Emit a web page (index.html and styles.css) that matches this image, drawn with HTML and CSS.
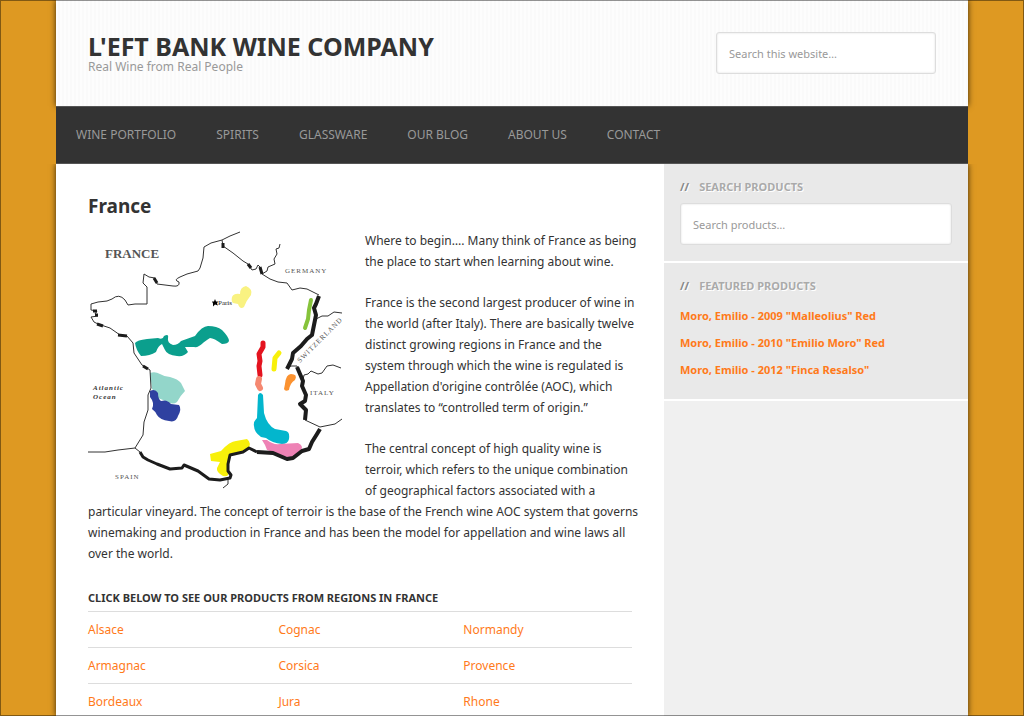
FILE: index.html
```html
<!DOCTYPE html>
<html lang="en">
<head>
<meta charset="utf-8">
<meta name="viewport" content="width=device-width, initial-scale=1">
<title>France – L'eft Bank Wine Company</title>
<link rel="stylesheet" href="styles.css">
</head>
<body>
<div class="page">
  <header class="site-header">
    <div class="brand">
      <p class="site-title">L'EFT BANK WINE COMPANY</p>
      <p class="tagline">Real Wine from Real People</p>
    </div>
    <form class="site-search" role="search">
      <input class="field" type="search" placeholder="Search this website…" aria-label="Search this website">
    </form>
  </header>
  <nav class="site-nav" aria-label="Main">
    <a href="#">WINE PORTFOLIO</a>
    <a href="#">SPIRITS</a>
    <a href="#">GLASSWARE</a>
    <a href="#">OUR BLOG</a>
    <a href="#">ABOUT US</a>
    <a href="#">CONTACT</a>
  </nav>
  <div class="columns">
    <main class="content">
      <h1>France</h1>
      <svg class="map" viewBox="88 231 258 258" role="img" aria-label="Map of the wine regions of France">
        <g class="regions">
          <path fill="#0b9f8d" d="M135 343Q137 340 147 339L158 338Q163 340 164 336Q169 333 168 338Q167 343 173 345Q178 345 181 341L195 336Q202 326 208 326Q217 326 222 330Q229 337 229 341Q228 344 222 344Q214 338 210 338Q204 342 203 343Q198 348 194 347L185 347L188 352Q184 357 177 356Q167 355 165 350L162 344Q158 346 156 352Q150 356 141 356Q136 350 135 343Z"/>
          <path fill="#93d6ca" d="M150 373Q155 371 160 374Q165 377 170 377Q178 379 181 383L185 391Q180 396 177 402Q173 405 168 402L158 398Q157 392 152 389Z"/>
          <path fill="#2f41a0" d="M150 391Q155 388 158 393Q158 399 161 401Q167 399 171 404L179 405Q182 409 178 416Q176 423 169 421Q160 420 157 415Q155 411 152 409Q155 403 150 397Z"/>
          <path fill="#f9f281" d="M232 297Q234 293 240 294Q240 287 246 286Q253 289 251 295Q246 301 244 307Q240 310 238 304L233 303Q231 301 232 297Z"/>
          <path fill="#fb9230" d="M285 384Q286 374 291 374Q298 374 295 380Q290 383 289 390Q285 392 284 389Z"/>
          <path fill="#03b6cd" d="M258 395Q260 391 263 395L264 413Q267 425 275 429L286 431Q290 432 289 439Q288 444 282 444Q272 443 266 438L261 437Q254 432 254 426Q253 422 257 418Z"/>
          <path fill="#ee82b5" d="M262 440L267 440Q273 445 280 444L298 443Q304 446 301 450L292 458L283 456Q274 452 267 450L265 445Z"/>
          <path fill="#f8f00a" d="M210 454L221 451Q230 441 236 441L247 439Q252 443 248 449L230 456L228 472Q230 477 223 476Q216 472 217 468L220 462L211 461Z"/>
          <path class="band" stroke="#86c33b" stroke-width="4" d="M311 300L309 310L308 319L305 328"/>
          <path class="band" stroke="#e4131f" stroke-width="5" d="M263 343L263 347L259 354L260 361L259 366L260 375"/>
          <path class="band" stroke="#f58871" stroke-width="6" d="M259 379L258 384L260 388"/>
          <path class="band" stroke="#f8f00a" stroke-width="5" d="M279 353L275 358L274 369"/>
        </g>
        <g class="border">
          <path d="M240 232L230 236L222 240L211 243L204 247L203 258L200 268L198 271L187 274L180 277Q173 280 179 282Q180 287 173 286L157 284L155 278L149 277L144 274L143 283L147 287L147 304L135 304L128 305L125 300Q119 293 112 299L107 301L98 302L91 304L91 310L97 311L95 314L98 316L91 317L94 322L98 324L110 328L120 335L127 336L133 343L134 353L142 365L150 370L151 388L148 395L148 410L144 422L143 435L135 448L118 450L105 452L88 452"/>
          <path d="M222 240L223 246L233 253L243 261L248 264L252 270L256 269L258 265L260 267L262 274L270 279L278 282L287 283L292 290L300 288L307 289L313 292L319 295"/>
          <path d="M262 274L267 271L268 267L275 264L274 259L277 254L276 249L279 248L280 244"/>
          <path d="M316 319L322 316L328 316L334 312L342 313"/>
          <path d="M287 368L291 366L297 366L303 380L304 375L308 374L311 371L318 374L322 373L327 366L333 365L341 368"/>
          <path d="M305 420L320 427L335 424L342 419M228 479L228 484L223 488M135 448L140 452"/>
          <path class="heavy" d="M319 296L316 304L314 308L316 315L314 325L312 335L307 339L301 346L293 353L292 359L287 369"/>
          <path class="heavy" d="M297 367L303 381L302 386L306 395L305 401L300 404L306 410L305 420"/>
          <path class="heavy" d="M320 429L317 434L312 442L309 449L302 451L293 458L287 459L273 453L257 452"/>
          <path class="medium" d="M257 452L249 448L243 452L230 455L228 464L228 471L231 475L230 478L220 480L209 479L198 471L184 465L182 468L170 469L157 464L148 460L143 457L140 452"/>
          <path class="medium" d="M154 278L157 283M223 243L223 248M248 264L251 268M260 267L262 274M93 311L97 311M95 315L98 315M97 324L103 326M118 335L127 336M143 366L148 369"/>
        </g>
        <path d="M215 299l1 2.500 2 0-1 2 1 2-3-1-2 2 0-3-1-2 2 0z"/>
        <g class="labels">
          <text class="country" x="105" y="258">FRANCE</text>
          <text class="paris" x="218" y="305">Paris</text>
          <text x="285" y="273">GERMANY</text>
          <text x="310" y="395">ITALY</text>
          <text x="115" y="479">SPAIN</text>
          <text transform="translate(300 363) rotate(-45)">SWITZERLAND</text>
          <text class="sea" x="93" y="390">Atlantic</text>
          <text class="sea" x="93" y="399">Ocean</text>
        </g>
      </svg>
      <p>Where to begin…. Many think of France as being the place to start when learning about wine.</p>
      <p>France is the second largest producer of wine in the world (after Italy). There are basically twelve distinct growing regions in France and the system through which the wine is regulated is Appellation d'origine contrôlée (AOC), which translates to “controlled term of origin.”</p>
      <p>The central concept of high quality wine is terroir, which refers to the unique combination of geographical factors associated with a particular vineyard. The concept of terroir is the base of the French wine AOC system that governs winemaking and production in France and has been the model for appellation and wine laws all over the world.</p>
      <table class="region-table">
        <caption>CLICK BELOW TO SEE OUR PRODUCTS FROM REGIONS IN FRANCE</caption>
        <tbody>
          <tr><td><a href="#">Alsace</a></td><td><a href="#">Cognac</a></td><td><a href="#">Normandy</a></td></tr>
          <tr><td><a href="#">Armagnac</a></td><td><a href="#">Corsica</a></td><td><a href="#">Provence</a></td></tr>
          <tr><td><a href="#">Bordeaux</a></td><td><a href="#">Jura</a></td><td><a href="#">Rhone</a></td></tr>
        </tbody>
      </table>
    </main>
    <aside class="sidebar">
      <section class="widget">
        <h2>SEARCH PRODUCTS</h2>
        <form role="search">
          <input class="field" type="search" placeholder="Search products…" aria-label="Search products">
        </form>
      </section>
      <section class="widget">
        <h2>FEATURED PRODUCTS</h2>
        <ul class="products">
          <li><a href="#">Moro, Emilio - 2009 "Malleolius" Red</a></li>
          <li><a href="#">Moro, Emilio - 2010 "Emilio Moro" Red</a></li>
          <li><a href="#">Moro, Emilio - 2012 "Finca Resalso"</a></li>
        </ul>
      </section>
    </aside>
  </div>
</div>
</body>
</html>
```

FILE: styles.css
```css
* { box-sizing: border-box; }

body {
  margin: 0;
  padding: 0 56px;
  background: #de9922;
  color: #333;
  font-family: "Noto Sans", sans-serif;
  font-size: 12px;
  line-height: 21px;
}

/* thin window frame */
body::after {
  content: "";
  position: fixed;
  inset: 0;
  border: 1px solid rgba(0, 0, 0, 0.42);
  pointer-events: none;
}

p, h1, h2, ul { margin: 0; padding: 0; }

a { color: #ff7a1a; text-decoration: none; }

.page {
  display: flex;
  flex-direction: column;
  min-height: 100vh;
}

.site-header {
  display: flex;
  justify-content: space-between;
  align-items: flex-start;
  padding: 32px;
  background: repeating-linear-gradient(90deg, #fdfdfd 0 2px, #fafafa 2px 4px);
  box-shadow: 0 0 6px rgba(0, 0, 0, 0.75);
}

.site-title {
  font-size: 25px;
  font-weight: 700;
  line-height: 28px;
}

.tagline {
  color: #999;
  line-height: 14px;
}

.site-search { width: 220px; }

.field {
  display: block;
  width: 100%;
  height: 42px;
  padding: 0 12px;
  border: 1px solid #ddd;
  border-radius: 3px;
  background: #fff;
  box-shadow: inset 0 0 2px rgba(0, 0, 0, 0.15);
  color: #333;
  font: 11px "Noto Sans", sans-serif;
}

.field::placeholder { color: #999; opacity: 1; }

.site-nav {
  position: relative;
  display: flex;
  gap: 40px;
  padding: 17px 20px 18px;
  border-top: 1px solid #555;
  border-bottom: 1px solid #555;
  background: #333;
}

.site-nav a { color: #999; }

.columns {
  flex: 1;
  display: grid;
  grid-template-columns: 2fr 1fr;
  background: #fff;
  box-shadow: 0 0 6px rgba(0, 0, 0, 0.75);
  clip-path: inset(0 -10px);
}

.content { padding: 28px 32px 0; }

.content h1 {
  margin-bottom: 10px;
  font-size: 19px;
  line-height: 28px;
}

.content p { margin: 0 -8px 20px 0; }

.map {
  float: left;
  width: 258px;
  height: 258px;
  margin: 1px 19px 0 0;
}

.band { fill: none; stroke-linecap: round; stroke-linejoin: round; }

.border path { fill: none; stroke: #333; stroke-width: 1; stroke-linejoin: round; }
.border .medium { stroke: #1c1c1c; stroke-width: 3; }
.border .heavy { stroke: #1c1c1c; stroke-width: 4; }

.labels { font-family: "Liberation Serif", serif; font-size: 7px; letter-spacing: 1px; fill: #555; }
.labels .country { font-size: 13px; font-weight: 700; letter-spacing: 0; }
.labels .paris { letter-spacing: 0; fill: #222; }
.labels .sea { font-style: italic; font-weight: 700; fill: #333; }

.region-table {
  clear: both;
  width: 100%;
  border-collapse: collapse;
  table-layout: fixed;
}

.region-table caption {
  padding: 3px 0;
  font-size: 11px;
  font-weight: 700;
  text-align: left;
}

.region-table td {
  width: 34%;
  padding: 7px 0;
  border-top: 1px solid #ddd;
}

.region-table td:first-child { width: 35%; }
.region-table td:last-child { width: 31%; }
.region-table tr:last-child td { padding-bottom: 0; }

.sidebar { background: #f0f0f0; }

.widget {
  padding: 12px 16px 16px;
  border-bottom: 2px solid #fff;
  background: #e9e9e9;
}

.widget h2 {
  margin-bottom: 6px;
  color: #aaa;
  font-size: 11px;
  font-weight: 700;
  line-height: 21px;
  text-shadow: 1px 1px #fff;
}

.widget h2::before {
  content: "//";
  margin-right: 10px;
  color: #888;
}

.products {
  padding-top: 3px;
  list-style: none;
  font-size: 11px;
  font-weight: 700;
}

.products li { margin-bottom: 6px; }
.products li:last-child { margin-bottom: 3px; }
```
